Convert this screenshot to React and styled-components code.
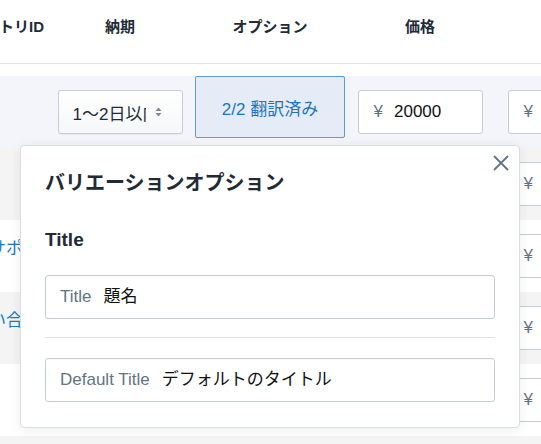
import React from "react";
import styled, { createGlobalStyle } from "styled-components";

const GlobalStyle = createGlobalStyle`
  html, body { margin: 0; padding: 0; }
  body {
    background: #fff;
    font-family: "Liberation Sans", "Noto Sans CJK JP", sans-serif;
    color: #212b36;
    overflow: hidden;
  }
`;

const columns = "195px 150px 150px 150px 150px";

const Page = styled.div`
  position: relative;
  width: 541px;
  height: 444px;
  overflow: hidden;
  background: #fff;
`;

const Table = styled.div`
  margin-left: -150px;
  width: 795px;
`;

const HeaderRow = styled.div`
  display: grid;
  grid-template-columns: ${columns};
  height: 63px;
  border-bottom: 1px solid #dfe3e8;
  margin-bottom: 12px;
`;

const HeadCell = styled.div`
  padding-top: 16px;
  padding-right: ${(p) => (p.$align === "right" ? "1px" : "0")};
  font-size: 15px;
  font-weight: 700;
  line-height: 22px;
  white-space: nowrap;
  text-align: ${(p) => p.$align || "center"};
`;

const Row = styled.div`
  display: grid;
  grid-template-columns: ${columns};
  height: 72px;
  align-items: center;
  background: ${(p) =>
    p.$tone === "active" ? "#f4f5fb" : p.$tone === "gray" ? "#f4f4f4" : "#fff"};
`;

const NameCell = styled.div`
  align-self: start;
  padding: 17px 0 0 105px;
  font-size: 17px;
  line-height: 24px;
  color: #1a7bc4;
  white-space: nowrap;
  overflow: hidden;
`;

const Cell = styled.div`
  display: flex;
  justify-content: center;
  align-self: ${(p) => (p.$top ? "start" : "center")};
`;

const SelectBox = styled.div`
  box-sizing: border-box;
  width: 125px;
  height: 44px;
  display: flex;
  align-items: center;
  padding: 0 20px 0 14px;
  border: 1px solid #c4cdd5;
  border-radius: 3px;
  background: linear-gradient(180deg, #fff, #f6f7f9);
  box-shadow: 0 1px 0 0 rgba(22, 29, 37, 0.05);
  font-size: 17px;
  color: #212b36;
`;

const SelectText = styled.span`
  flex: none;
  width: 73px;
  overflow: hidden;
  white-space: nowrap;
  margin-right: 9px;
`;

const OptionButton = styled.button`
  box-sizing: border-box;
  width: 150px;
  height: 62px;
  border: 1px solid #5c9bd6;
  border-radius: 2px;
  background: #e5ecf8;
  color: #1a74c0;
  font-family: inherit;
  font-size: 17px;
  padding: 0;
  cursor: pointer;
`;

const MoneyField = styled.div`
  box-sizing: border-box;
  width: 125px;
  height: 44px;
  display: flex;
  align-items: center;
  padding-left: 15px;
  border: 1px solid #c4cdd5;
  border-radius: 3px;
  background: #fff;
  font-size: 17px;
`;

const FieldLine = styled.span`
  display: block;
  line-height: 24px;
  white-space: nowrap;
`;

const Prefix = styled.span`
  color: #637381;
  margin-right: 11px;
`;

const Value = styled.span`
  color: #111;
`;

const Popover = styled.div`
  position: absolute;
  left: 20px;
  top: 145px;
  box-sizing: border-box;
  width: 500px;
  height: 283px;
  padding: 23px 24px 0;
  background: #fff;
  border: 1px solid #d9dee3;
  border-radius: 4px;
  box-shadow: 0 2px 12px rgba(33, 43, 54, 0.08);
`;

const CloseButton = styled.button`
  position: absolute;
  top: 7px;
  right: 8px;
  width: 20px;
  height: 20px;
  padding: 0;
  border: 0;
  background: none;
  display: flex;
  cursor: pointer;
`;

const PopTitle = styled.h2`
  margin: 0;
  font-size: 20px;
  line-height: 28px;
  font-weight: 700;
  color: #212b36;
`;

const SectionTitle = styled.h3`
  margin: 31px 0 0;
  font-size: 19px;
  line-height: 24px;
  font-weight: 700;
  color: #212b36;
`;

const TextField = styled.div`
  box-sizing: border-box;
  height: 44px;
  margin-top: ${(p) => p.$mt}px;
  display: flex;
  align-items: center;
  padding-left: 14px;
  border: 1px solid #c4cdd5;
  border-radius: 3px;
  box-shadow: inset 0 1px 0 0 rgba(99, 115, 129, 0.05);
  font-size: 17px;
`;

const FieldLabel = styled.span`
  color: #637381;
  margin-right: 12px;
`;

const Divider = styled.hr`
  margin: 18px 0 0;
  border: 0;
  border-top: 1px solid #dfe3e8;
`;

const SelectArrows = () => (
  <svg width="7" height="12" viewBox="0 0 7 12">
    <path d="M0.5 5 L3.5 1.5 L6.5 5 Z" fill="#7c8895" />
    <path d="M0.5 7 L3.5 10.5 L6.5 7 Z" fill="#7c8895" />
  </svg>
);

const CloseIcon = () => (
  <svg width="20" height="20" viewBox="0 0 20 20">
    <path
      d="M3.5 3.5 L16.5 16.5 M16.5 3.5 L3.5 16.5"
      stroke="#637381"
      strokeWidth="1.8"
      strokeLinecap="round"
    />
  </svg>
);

const rows = [
  { tone: "active", name: "", filled: true },
  { tone: "gray", name: "", filled: true },
  { tone: "white", name: "技術サポート", filled: true },
  { tone: "gray", name: "お問い合わせ", filled: true },
  { tone: "white", name: "", filled: true },
  { tone: "gray", name: "", filled: false },
];

export default function App() {
  return (
    <>
      <GlobalStyle />
      <Page>
        <Table>
          <HeaderRow>
            <HeadCell $align="right">エントリID</HeadCell>
            <HeadCell>納期</HeadCell>
            <HeadCell>オプション</HeadCell>
            <HeadCell>価格</HeadCell>
            <HeadCell />
          </HeaderRow>
          {rows.map((r, i) => (
            <Row key={i} $tone={r.tone}>
              <NameCell>{r.name}</NameCell>
              {r.filled && (
                <>
                  <Cell>
                    <SelectBox>
                      <SelectText>1〜2日以内</SelectText>
                      <SelectArrows />
                    </SelectBox>
                  </Cell>
                  <Cell $top>
                    <OptionButton>2/2 翻訳済み</OptionButton>
                  </Cell>
                  <Cell>
                    <MoneyField>
                      <FieldLine>
                        <Prefix>¥</Prefix>
                        <Value>20000</Value>
                      </FieldLine>
                    </MoneyField>
                  </Cell>
                  <Cell>
                    <MoneyField>
                      <FieldLine>
                        <Prefix>¥</Prefix>
                      </FieldLine>
                    </MoneyField>
                  </Cell>
                </>
              )}
            </Row>
          ))}
        </Table>

        <Popover>
          <CloseButton aria-label="閉じる">
            <CloseIcon />
          </CloseButton>
          <PopTitle>バリエーションオプション</PopTitle>
          <SectionTitle>Title</SectionTitle>
          <TextField $mt={23}>
            <FieldLine>
              <FieldLabel>Title</FieldLabel>
              <Value>題名</Value>
            </FieldLine>
          </TextField>
          <Divider />
          <TextField $mt={20}>
            <FieldLine>
              <FieldLabel>Default Title</FieldLabel>
              <Value>デフォルトのタイトル</Value>
            </FieldLine>
          </TextField>
        </Popover>
      </Page>
    </>
  );
}
